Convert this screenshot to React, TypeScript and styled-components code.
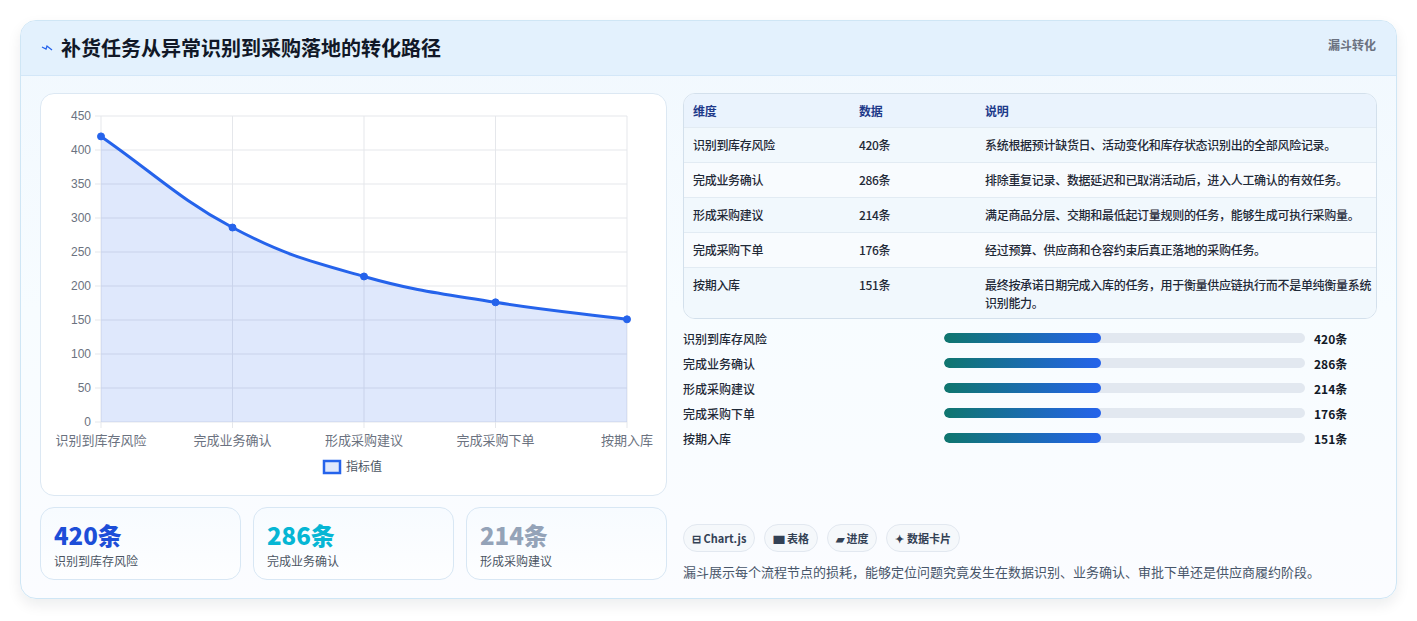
import React from "react";
import styled, { createGlobalStyle } from "styled-components";

const Global = createGlobalStyle`
  body { margin: 0; background: #fff; font-family: "Noto Sans CJK SC", "Noto Sans", sans-serif; }
`;

const Page = styled.div`
  padding: 20px 20px 22px 20px;
  height: 621px;
  box-sizing: border-box;
`;

const Card = styled.div`
  width: 1377px;
  height: 579px;
  box-sizing: border-box;
  border: 1px solid #cfe6f5;
  border-radius: 16px;
  background: linear-gradient(180deg, #f1f8fe 0%, #f7fcff 50%, #fbfcff 100%);
  box-shadow: 0 6px 14px rgba(15, 23, 42, 0.08);
  overflow: hidden;
  display: flex;
  flex-direction: column;
`;

const Header = styled.div`
  height: 55px;
  flex: none;
  box-sizing: border-box;
  background: #e3f1fd;
  border-bottom: 1px solid #d3e7f8;
  display: flex;
  align-items: flex-start;
  justify-content: space-between;
  padding: 0 20px;
`;

const Title = styled.h1`
  margin: 13px 0 0;
  font-size: 20px;
  line-height: 28px;
  font-weight: 700;
  color: #111827;
  display: flex;
  align-items: center;
  gap: 8px;
`;

const Tag = styled.span`
  margin-top: 15px;
  font-size: 12px;
  font-weight: 700;
  color: #6b7280;
`;

const Body = styled.div`
  display: grid;
  grid-template-columns: 627px 694px;
  gap: 16px;
  padding: 17px 19px 0 19px;
`;

const LeftCol = styled.div`
  display: flex;
  flex-direction: column;
  gap: 11px;
`;

const ChartPanel = styled.div`
  height: 403px;
  box-sizing: border-box;
  border: 1px solid #dce8f3;
  border-radius: 14px;
  background: #fff;
`;

const Stats = styled.div`
  display: grid;
  grid-template-columns: repeat(3, 1fr);
  gap: 12px;
`;

const Stat = styled.div`
  height: 73px;
  box-sizing: border-box;
  border: 1px solid #d8e7f4;
  border-radius: 14px;
  background: linear-gradient(180deg, #f7fbff, #fdfeff);
  padding: 10px 13px;
`;

const StatNum = styled.div<{ $c: string }>`
  font-size: 24px;
  font-weight: 800;
  line-height: 34px;
  color: ${(p) => p.$c};
`;

const StatLabel = styled.div`
  font-size: 12px;
  color: #4b5563;
  line-height: 18px;
`;

const RightCol = styled.div`
  display: flex;
  flex-direction: column;
`;

const Table = styled.div`
  border: 1px solid #d3e0ec;
  border-radius: 12px;
  overflow: hidden;
  background: #fafcfe;
  font-size: 12px;
  letter-spacing: -0.3px;
`;

const Row = styled.div<{ $head?: boolean }>`
  display: grid;
  grid-template-columns: 166px 126px 1fr;
  padding: 0 4px 0 9px;
  min-height: ${(p) => (p.$head ? "33px" : "35px")};
  align-items: start;
  padding-top: 8px;
  padding-bottom: 6px;
  box-sizing: border-box;
  background: ${(p) => (p.$head ? "#eaf3fd" : "#f8fbfe")};
  border-top: ${(p) => (p.$head ? "none" : "1px solid #e2ebf3")};
  color: ${(p) => (p.$head ? "#1e3a8a" : "#1f2937")};
  font-weight: ${(p) => (p.$head ? 600 : 500)};
  line-height: 18px;
  &:nth-child(2n) { background: ${(p) => (p.$head ? "#eaf3fd" : "#f1f8fd")}; }
`;

const Bars = styled.div`
  display: flex;
  flex-direction: column;
  gap: 7px;
  margin-top: 10px;
`;

const BarRow = styled.div`
  display: grid;
  grid-template-columns: 252px 361px 1fr;
  gap: 0 9px;
  align-items: center;
  height: 18px;
  font-size: 12px;
  font-weight: 500;
  color: #1f2937;
`;

const Track = styled.div`
  height: 10px;
  border-radius: 5px;
  background: #e2e8f0;
  overflow: hidden;
`;

const Fill = styled.div`
  height: 100%;
  border-radius: 5px;
  background: linear-gradient(90deg, #0f766e, #2563eb);
`;

const Val = styled.span`
  font-weight: 700;
  color: #111827;
`;

const Chips = styled.div`
  display: flex;
  gap: 9px;
  margin-top: 77px;
`;

const Chip = styled.span`
  height: 28px;
  box-sizing: border-box;
  padding: 0 8px;
  border: 1px solid #e2e8f0;
  border-radius: 14px;
  background: #f5f8fb;
  font-size: 11px;
  font-weight: 600;
  color: #334155;
  display: inline-flex;
  align-items: center;
  gap: 3px;
`;

const Desc = styled.p`
  margin: 10px 0 0;
  font-size: 13px;
  color: #475569;
`;

const tableRows = [
  ["识别到库存风险", "420条", "系统根据预计缺货日、活动变化和库存状态识别出的全部风险记录。"],
  ["完成业务确认", "286条", "排除重复记录、数据延迟和已取消活动后，进入人工确认的有效任务。"],
  ["形成采购建议", "214条", "满足商品分层、交期和最低起订量规则的任务，能够生成可执行采购量。"],
  ["完成采购下单", "176条", "经过预算、供应商和仓容约束后真正落地的采购任务。"],
  ["按期入库", "151条", "最终按承诺日期完成入库的任务，用于衡量供应链执行而不是单纯衡量系统识别能力。"],
];

const labels = ["识别到库存风险", "完成业务确认", "形成采购建议", "完成采购下单", "按期入库"];
const values = [420, 286, 214, 176, 151];

function Chart() {
  const x0 = 60, x1 = 586, yTop = 22, yBot = 328;
  const xs = labels.map((_, i) => x0 + ((x1 - x0) / 4) * i);
  const y = (v: number) => yBot - ((yBot - yTop) * v) / 450;
  const ys = values.map(y);
  let d = `M${xs[0]},${ys[0]}`;
  for (let i = 0; i < 4; i++) {
    const dx = (xs[i + 1] - xs[i]) * 0.4;
    const s0 = i === 0 ? (ys[1] - ys[0]) / (xs[1] - xs[0]) : (ys[i + 1] - ys[i - 1]) / (xs[i + 1] - xs[i - 1]);
    const s1 = i === 3 ? (ys[4] - ys[3]) / (xs[4] - xs[3]) : (ys[i + 2] - ys[i]) / (xs[i + 2] - xs[i]);
    d += ` C${xs[i] + dx},${ys[i] + s0 * dx} ${xs[i + 1] - dx},${ys[i + 1] - s1 * dx} ${xs[i + 1]},${ys[i + 1]}`;
  }
  const area = `${d} L${x1},${yBot} L${x0},${yBot} Z`;
  const ticks = [0, 50, 100, 150, 200, 250, 300, 350, 400, 450];
  return (
    <svg width="627" height="401" viewBox="0 0 627 401" fontFamily="'Liberation Sans', Arial, sans-serif">
      {ticks.map((t) => (
        <g key={t}>
          <line x1={x0 - 6} x2={x1} y1={y(t)} y2={y(t)} stroke="#e5e7eb" />
          <text x={x0 - 10} y={y(t) + 4} textAnchor="end" fontSize="12" fill="#6b7280">{t}</text>
        </g>
      ))}
      {xs.map((x, i) => (
        <g key={i}>
          <line x1={x} x2={x} y1={yTop} y2={yBot + 6} stroke="#e5e7eb" />
          <text x={x} y={351} textAnchor="middle" fontSize="13" fill="#6b7280" fontFamily="'Noto Sans CJK SC', sans-serif">{labels[i]}</text>
        </g>
      ))}
      <path d={area} fill="rgba(37,99,235,0.15)" />
      <path d={d} fill="none" stroke="#2563eb" strokeWidth="3" />
      {xs.map((x, i) => (
        <circle key={i} cx={x} cy={ys[i]} r="3.5" fill="#2563eb" stroke="#2563eb" />
      ))}
      <rect x="283" y="367" width="16" height="12" fill="rgba(37,99,235,0.15)" stroke="#2563eb" strokeWidth="2.5" />
      <text x="305" y="377" fontSize="12" fill="#4b5563" fontFamily="'Noto Sans CJK SC', sans-serif">指标值</text>
    </svg>
  );
}

export default function App() {
  return (
    <Page>
      <Global />
      <Card>
        <Header>
          <Title>
            <svg width="12" height="10" viewBox="0 0 12 10">
              <path d="M1 4 L5 6 L6 3 L11 7" stroke="#2563eb" strokeWidth="1.3" fill="none" />
            </svg>
            补货任务从异常识别到采购落地的转化路径
          </Title>
          <Tag>漏斗转化</Tag>
        </Header>
        <Body>
          <LeftCol>
            <ChartPanel>
              <Chart />
            </ChartPanel>
            <Stats>
              <Stat><StatNum $c="#1d4ed8">420条</StatNum><StatLabel>识别到库存风险</StatLabel></Stat>
              <Stat><StatNum $c="#06b6d4">286条</StatNum><StatLabel>完成业务确认</StatLabel></Stat>
              <Stat><StatNum $c="#94a3b8">214条</StatNum><StatLabel>形成采购建议</StatLabel></Stat>
            </Stats>
          </LeftCol>
          <RightCol>
            <Table>
              <Row $head><span>维度</span><span>数据</span><span>说明</span></Row>
              {tableRows.map((r) => (
                <Row key={r[0]}><span>{r[0]}</span><span>{r[1]}</span><span>{r[2]}</span></Row>
              ))}
            </Table>
            <Bars>
              {labels.map((l, i) => (
                <BarRow key={l}>
                  <span>{l}</span>
                  <Track><Fill style={{ width: "43.5%" }} /></Track>
                  <Val>{values[i]}条</Val>
                </BarRow>
              ))}
            </Bars>
            <Chips>
              <Chip>⊟ Chart.js</Chip>
              <Chip>▆ 表格</Chip>
              <Chip>▰ 进度</Chip>
              <Chip>✦ 数据卡片</Chip>
            </Chips>
            <Desc>漏斗展示每个流程节点的损耗，能够定位问题究竟发生在数据识别、业务确认、审批下单还是供应商履约阶段。</Desc>
          </RightCol>
        </Body>
      </Card>
    </Page>
  );
}
